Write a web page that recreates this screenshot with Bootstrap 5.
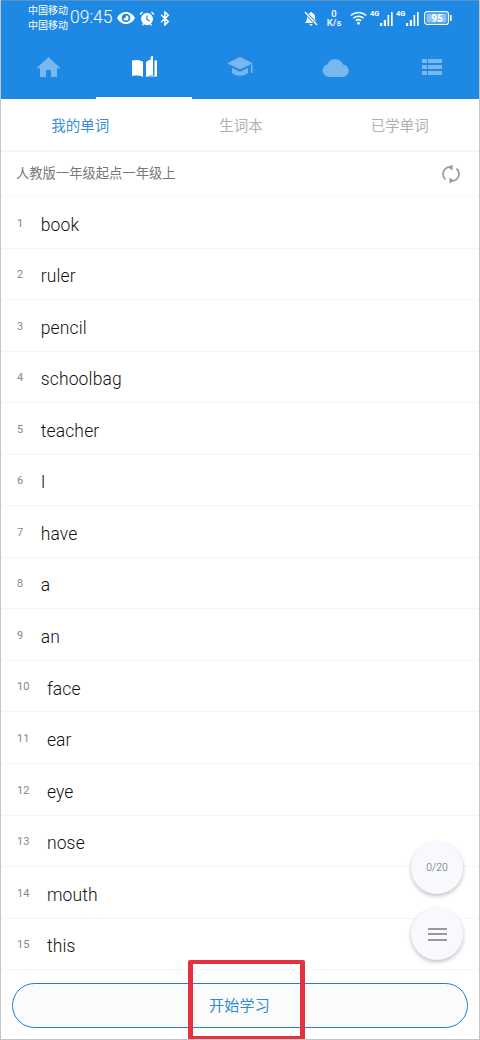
<!DOCTYPE html>
<html lang="zh">
<head>
<meta charset="utf-8">
<link href="https://cdn.jsdelivr.net/npm/bootstrap@5.3.0/dist/css/bootstrap.min.css" rel="stylesheet">
<style>
html,body{width:480px;height:1040px;overflow:hidden;margin:0}
body{font-family:Roboto,"Noto Sans CJK SC",sans-serif;background:#fff;color:#333}
.screen{position:relative;width:480px;height:1040px;overflow:hidden;background:#fff;border-left:1px solid #c4c4c4;border-right:1px solid #c4c4c4;border-bottom:1px solid #c4c4c4}
.topbar{background:#1e88e5;height:99px;margin:0 -1px;border-top:1px solid #5b8fc0;color:#fff}
.statusrow{height:34px;padding:0 28px;align-items:center}
.carrier{font-size:10px;line-height:14.5px;width:41px;white-space:nowrap;padding-top:1px}
.clock{font-size:17.5px;line-height:1;margin-left:1px;font-weight:300}
.st-ic{display:block;fill:#fff}
.fourg{font-size:7.5px;line-height:1;align-self:flex-start;font-weight:700;width:10px}
.ntabs{height:64px}
.ntab{flex:1 1 0;display:flex;align-items:center;justify-content:center;height:100%;opacity:.4}
.ntab.on{opacity:1;position:relative}
.ntab.on::after{content:"";position:absolute;left:0;right:0;bottom:0;height:2px;background:#fff}
.ntab svg{fill:#fff;display:block}
.subtabs{height:51px;border-bottom:2px solid #f4f4f4;box-sizing:content-box}
.subtab{flex:1 1 0;text-align:center;font-size:14.5px;line-height:51px;padding-top:2px;height:51px;color:#b0b0b0}
.subtab.on{color:#3a8fd6;padding-right:2px}
.bookhead{height:45px;padding:0 15px;border-bottom:1px solid #f8f8f8;font-size:13.3px;color:#777}
.wordrow{height:51.55px;padding:5px 0 0 16px;border-bottom:1px solid #f6f6f6;align-items:center}
.wnum{font-size:11px;color:#888;margin-right:17.500px;position:relative;top:-1px}
.wtext{font-size:17.5px;font-weight:300;color:#111;letter-spacing:.15px}
.fab{position:absolute;left:410px;width:52px;height:52px;border-radius:50%;background:#f7f9fe;box-shadow:0 2px 4px rgba(0,0,0,.25);font-size:10.5px;font-weight:300;color:#666}
.fab .bars{width:19px;height:13px;border-top:2px solid #999;border-bottom:2px solid #999;position:relative}
.fab .bars::after{content:"";position:absolute;left:0;right:0;top:3.5px;height:2px;background:#999}
.startbtn{position:absolute;left:11px;top:983px;width:456px;height:45px;border:1.5px solid #1f7fd0;border-radius:23px;background:#fbfbfb;color:#2f8bd0;font-size:15px;letter-spacing:.3px;padding:2px 1px 0 0}
.redbox{position:absolute;left:187px;top:960px;width:117px;height:80px;border-style:solid;border-color:#e5303f;border-width:4px 5px;border-radius:2px}
</style>
</head>
<body>
<div class="screen">
  <div class="topbar">
    <div class="d-flex statusrow">
      <div class="carrier">中国移动<br>中国移动</div>
      <div class="clock">09:45</div>
      <svg class="st-ic" width="18" height="12" viewBox="0 0 18 12" style="margin-left:4px"><path fill-rule="evenodd" d="M9 0C5 0 1.800 2.400 0 6c1.800 3.600 5 6 9 6s7.200-2.400 9-6c-1.800-3.600-5-6-9-6zM9 1.800C6.500 1.800 4.600 3.700 4.600 6s1.900 4.200 4.400 4.200 4.400-1.900 4.400-4.200S11.500 1.800 9 1.800zM9 3.500a2.500 2.500 0 1 1-2.500 2.500c.3.600 1.500.6 2-.2s.3-1.900.5-2.300z"/></svg>
      <svg class="st-ic" width="16" height="15" viewBox="0 0 16 15" style="margin-left:4px"><path d="M3 .5 .5 3l1 1L4 1.500zM13 .5 15.500 3l-1 1L12 1.500z"/><path fill-rule="evenodd" d="M8 2a6 6 0 0 0-4 10.400L2.800 14l1 .8L5 13.300a6 6 0 0 0 6 0l1.200 1.500 1-.8-1.200-1.600A6 6 0 0 0 8 2zM7.300 4.500h1.200V8l2.500 1.500-.6 1L7.300 8.700z"/></svg>
      <svg class="st-ic" width="10" height="15" viewBox="0 0 10 15" style="margin-left:5px"><path d="M1 3.700 8.300 10.600 4.900 14V1l3.400 3.300L1 11.200" fill="none" stroke="#fff" stroke-width="1.500"/></svg>
      <svg class="st-ic ms-auto" width="14" height="15" viewBox="0 0 14 15"><path d="M7 1a1 1 0 0 1 1 1c2 .5 3 2 3 4 0 3 .5 4 2 6H1c1.500-2 2-3 2-6 0-2 1-3.500 3-4a1 1 0 0 1 1-1zM5.500 13h3a1.500 1.500 0 0 1-3 0z"/><path d="M1 1 13 14" stroke="#1e88e5" stroke-width="3"/><path d="M1 1 13 14" stroke="#fff" stroke-width="1.300"/></svg>
      <div class="text-center" style="font-size:9.5px;line-height:9px;width:18px;margin-left:7px;font-weight:500">0<br>K/s</div>
      <svg class="st-ic" width="17" height="14" viewBox="0 0 17 14" style="margin-left:7px"><g fill="none" stroke="#fff" stroke-width="1.500"><path d="M.8 4.500c4.500-4 10.900-4 15.400 0"/><path d="M3.300 7.200c3-2.700 7.400-2.700 10.400 0"/><path d="M5.800 9.800c1.600-1.400 3.800-1.400 5.400 0"/></g><circle cx="8.500" cy="12.300" r="1.400"/></svg>
      <div class="d-flex align-items-end" style="margin-left:3px;height:16px">
        <span class="fourg">4G</span>
        <svg class="st-ic" width="14" height="15" viewBox="0 0 14 15"><path d="M0 12h2.200v3H0zM3.800 9H6v6H3.800zM7.500 4h1.700v11H7.500zM11 1h1.700v14H11z"/></svg>
      </div>
      <div class="d-flex align-items-end" style="margin-left:2px;height:16px">
        <span class="fourg">4G</span>
        <svg class="st-ic" width="14" height="15" viewBox="0 0 14 15"><path d="M0 12h2.200v3H0zM3.800 9H6v6H3.800zM7.500 4h1.700v11H7.500zM11 1h1.700v14H11z"/></svg>
      </div>
      <svg width="28" height="14" viewBox="0 0 28 14" style="margin-left:4px;display:block"><rect x=".6" y=".6" width="23.800" height="12.800" rx="2.500" fill="none" stroke="#fff" stroke-width="1.200"/><rect x="2.500" y="2.500" width="20" height="9" rx="1" fill="#8fc3f2"/><rect x="26" y="4" width="1.600" height="6" fill="#fff"/><text x="13" y="10.500" font-size="10" font-weight="700" text-anchor="middle" fill="#fff" font-family="Roboto">95</text></svg>
    </div>
    <div class="d-flex ntabs">
      <div class="ntab"><svg width="23" height="20" viewBox="0 0 23 20"><path d="M11.500 0 23 10.800l-1.300 1.200L20 10.500V20h-6v-7H9v7H3v-9.500L1.300 12 0 10.800z"/></svg></div>
      <div class="ntab on"><svg width="27" height="23" viewBox="0 0 27 23"><path d="M1 4.500c3.500-1 8-.8 11 1.300V21c-3-1.600-7.500-1.800-11-1zM15 6c1.200-1 3-2 4.800-2.800V.5L22 0v19c-2.500.3-5 1-7 2.200z"/><path d="M23.500 4.500h2.500V20.500h-9c2-.8 4.500-1 6.500-1z"/></svg></div>
      <div class="ntab"><svg width="27" height="21" viewBox="0 0 27 21"><path d="M13 0 26 6.300 13 12.500 0 6.300z"/><path d="M5 11v5c4 3.500 12 3.500 16 0v-5l-8 3.800z"/><path d="M24 8v8h1.500V7.300z"/></svg></div>
      <div class="ntab"><svg width="28" height="19" viewBox="0 0 28 19"><path d="M7 19a6.500 6.500 0 0 1-1.500-12.800A8.500 8.500 0 0 1 21 6.500 6.300 6.300 0 0 1 21.500 19z"/></svg></div>
      <div class="ntab"><svg width="20" height="16" viewBox="0 0 20 16"><path d="M0 0h5v4H0zM6 0h14v4H6zM0 6h5v4H0zM6 6h14v4H6zM0 12h5v4H0zM6 12h14v4H6z"/></svg></div>
    </div>
  </div>

  <div class="d-flex subtabs">
    <div class="subtab on">我的单词</div>
    <div class="subtab">生词本</div>
    <div class="subtab">已学单词</div>
  </div>

  <div class="d-flex align-items-center justify-content-between bookhead">
    <span>人教版一年级起点一年级上</span>
    <svg width="18" height="20" viewBox="0 0 18 20" class="me-1" fill="none" stroke="#999" stroke-width="1.700"><path d="M3.500 15.500A7 7 0 0 1 8 3.200"/><path d="M14.500 4.500A7 7 0 0 1 10 16.800"/><path d="M10.500 .5 6 3.300l4.500 3.200z" fill="#999" stroke="none"/><path d="M7.500 19.500 12 16.700l-4.500-3.200z" fill="#999" stroke="none"/></svg>
  </div>

  <div class="d-flex wordrow"><span class="wnum">1</span><span class="wtext">book</span></div>
  <div class="d-flex wordrow"><span class="wnum">2</span><span class="wtext">ruler</span></div>
  <div class="d-flex wordrow"><span class="wnum">3</span><span class="wtext">pencil</span></div>
  <div class="d-flex wordrow"><span class="wnum">4</span><span class="wtext">schoolbag</span></div>
  <div class="d-flex wordrow"><span class="wnum">5</span><span class="wtext">teacher</span></div>
  <div class="d-flex wordrow"><span class="wnum">6</span><span class="wtext">I</span></div>
  <div class="d-flex wordrow"><span class="wnum">7</span><span class="wtext">have</span></div>
  <div class="d-flex wordrow"><span class="wnum">8</span><span class="wtext">a</span></div>
  <div class="d-flex wordrow"><span class="wnum">9</span><span class="wtext">an</span></div>
  <div class="d-flex wordrow"><span class="wnum">10</span><span class="wtext">face</span></div>
  <div class="d-flex wordrow"><span class="wnum">11</span><span class="wtext">ear</span></div>
  <div class="d-flex wordrow"><span class="wnum">12</span><span class="wtext">eye</span></div>
  <div class="d-flex wordrow"><span class="wnum">13</span><span class="wtext">nose</span></div>
  <div class="d-flex wordrow"><span class="wnum">14</span><span class="wtext">mouth</span></div>
  <div class="d-flex wordrow"><span class="wnum">15</span><span class="wtext">this</span></div>

  <div class="fab d-flex align-items-center justify-content-center" style="top:842px">0/20</div>
  <div class="fab d-flex align-items-center justify-content-center" style="top:908px"><div class="bars"></div></div>

  <button type="button" class="btn startbtn">开始学习</button>
  <div class="redbox"></div>
</div>
<script src="https://cdn.jsdelivr.net/npm/bootstrap@5.3.0/dist/js/bootstrap.bundle.min.js"></script>
</body>
</html>
